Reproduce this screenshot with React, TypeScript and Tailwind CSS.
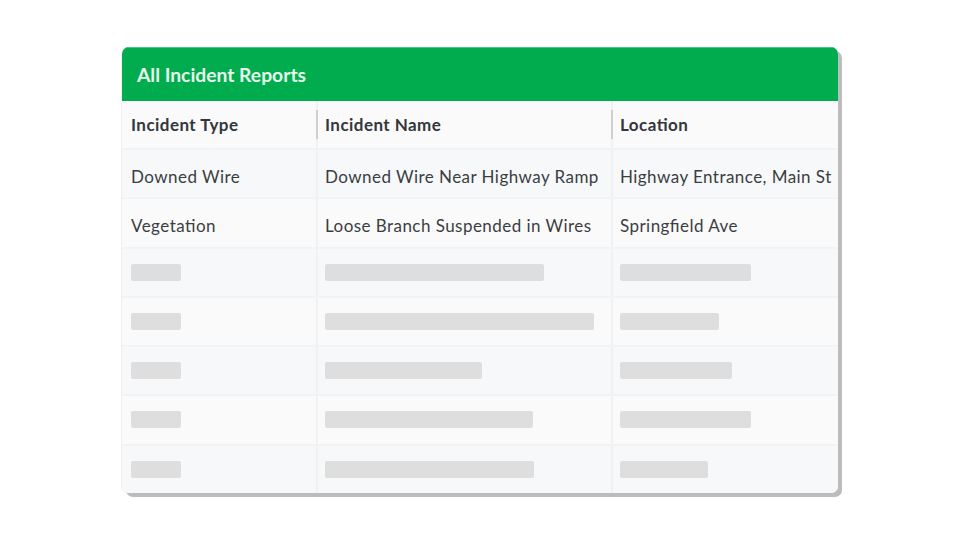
const skeletons = [
  { name: 219, location: 131 },
  { name: 269, location: 99 },
  { name: 157, location: 112 },
  { name: 208, location: 131 },
  { name: 209, location: 88 },
];

const reports = [
  { type: 'Downed Wire', name: 'Downed Wire Near Highway Ramp', location: 'Highway Entrance, Main St' },
  { type: 'Vegetation', name: 'Loose Branch Suspended in Wires', location: 'Springfield Ave' },
];

function Row({ index, children }: { index: number; children: React.ReactNode }) {
  return (
    <div
      className={`grid h-[49.25px] grid-cols-[194px_295px_1fr] items-stretch border-b-2 border-[#f2f3f4] last:h-[47px] last:border-b-0 ${
        index % 2 === 0 ? 'bg-[#f6f8f9]' : 'bg-[#fafafa]'
      }`}
    >
      {children}
    </div>
  );
}

function Cell({ children, first, text }: { children: React.ReactNode; first?: boolean; text?: boolean }) {
  return (
    <div
      className={`flex items-center overflow-hidden whitespace-nowrap ${text ? 'pt-[6px]' : ''} ${
        first ? 'pl-[9px]' : 'border-l-2 border-[#f0f1f2] pl-[7px]'
      }`}
    >
      {children}
    </div>
  );
}

function Bar({ width }: { width: number }) {
  return <div className="h-[17px] rounded-[2px] bg-[#dedede]" style={{ width }} />;
}

function HeaderCell({ label, first }: { label: string; first?: boolean }) {
  return (
    <div
      className={`relative flex items-center font-bold text-[#33373b] ${
        first ? 'pl-[9px]' : 'border-l-2 border-[#f0f1f2] pl-[7px]'
      }`}
    >
      {!first && <span className="absolute left-[-2px] top-[9px] h-[29px] w-[2px] bg-[#cdcfd1]" />}
      {label}
    </div>
  );
}

export default function App() {
  return (
    <div className="flex h-[540px] w-[960px] items-start justify-center bg-white pt-[47px] font-['Lato',sans-serif]">
      <div className="w-[716px] overflow-hidden rounded-[7px] shadow-[4px_4px_0_#bcbcbc,-1px_0_0_#efefef]">
        <div className="flex h-[54px] items-center border-t border-[#4cc482] bg-[#00ac4e] pl-[15px] pt-[2px] text-[19.3px] font-bold text-[#e6f7ec]">
          All Incident Reports
        </div>
        <div className="text-[17px] tracking-[0.45px] text-[#3a3e42] [font-feature-settings:'liga'_1] [font-variant-ligatures:common-ligatures]">
          <div className="grid h-[49px] grid-cols-[194px_295px_1fr] border-b-2 border-[#f2f3f4] bg-[#fafafa]">
            <HeaderCell label="Incident Type" first />
            <HeaderCell label="Incident Name" />
            <HeaderCell label="Location" />
          </div>
          {reports.map((r, i) => (
            <Row key={r.name} index={i}>
              <Cell first text>
                {r.type}
              </Cell>
              <Cell text>{r.name}</Cell>
              <Cell text>{r.location}</Cell>
            </Row>
          ))}
          {skeletons.map((s, i) => (
            <Row key={i} index={i}>
              <Cell first>
                <Bar width={50} />
              </Cell>
              <Cell>
                <Bar width={s.name} />
              </Cell>
              <Cell>
                <Bar width={s.location} />
              </Cell>
            </Row>
          ))}
        </div>
      </div>
    </div>
  );
}
